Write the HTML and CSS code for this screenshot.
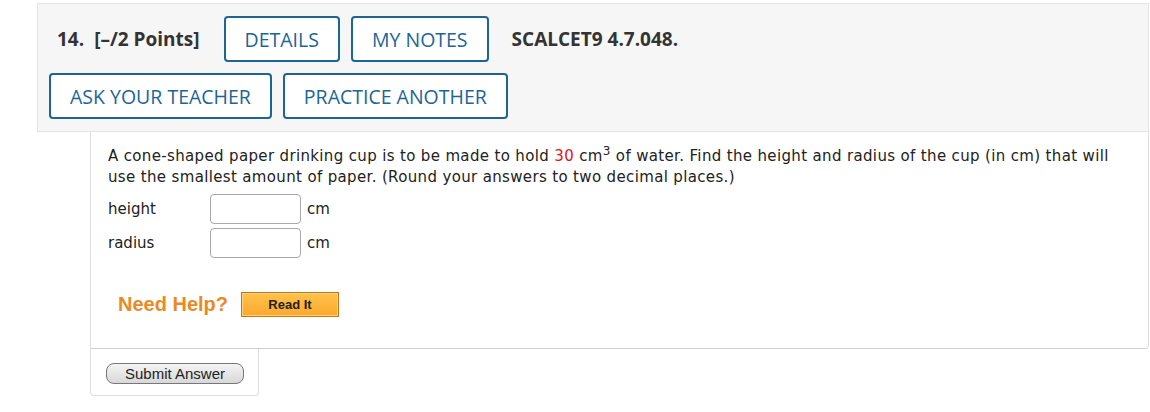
FILE: index.html
```html
<!DOCTYPE html>
<html lang="en">
<head>
  <meta charset="UTF-8" />
  <title>SCALCET9 4.7.048</title>
  <link rel="stylesheet" href="styles.css">
</head>
<body>

  <div class="question">
    <div class="q-header">
      <div class="q-row q-row-top">
        <span class="q-num">14.</span>
        <span class="q-points">[&ndash;/2 Points]</span>
        <button class="q-btn">DETAILS</button>
        <button class="q-btn">MY NOTES</button>
        <span class="q-code">SCALCET9 4.7.048.</span>
      </div>
      <div class="q-row">
        <button class="q-btn">ASK YOUR TEACHER</button>
        <button class="q-btn">PRACTICE ANOTHER</button>
      </div>
    </div>

    <div class="q-body">
      <p class="q-text">A cone-shaped paper drinking cup is to be made to hold <span class="red">30</span> cm<sup>3</sup> of water. Find the height and radius of the cup (in cm) that will use the smallest amount of paper. (Round your answers to two decimal places.)</p>

      <div class="answers">
        <div class="answer">
          <span class="answer-label">height</span>
          <input class="answer-box" type="text">
          <span class="unit">cm</span>
        </div>
        <div class="answer">
          <span class="answer-label">radius</span>
          <input class="answer-box" type="text">
          <span class="unit">cm</span>
        </div>
      </div>

      <div class="help">
        <span class="help-title">Need Help?</span>
        <button class="read-it">Read It</button>
      </div>
    </div>

    <div class="submit-tab">
      <button class="submit">Submit Answer</button>
    </div>
  </div>

</body>
</html>
```

FILE: styles.css
```css
:root {
  --blue: #1c6597;
  --panel: #f6f6f6;
  --line: #dedede;
  --text: #333;
  --orange: #ea8a1f;
}

body {
  margin: 0;
  padding: 3px 1px 0 37px;
  background: #fff;
  color: #222;
}

/* header strip with the question number and buttons */
.q-header {
  background: var(--panel);
  border: 1px solid #e4e4e4;
  padding: 12px 0 12px 11px;
  font-family: 'Open Sans', sans-serif;
}

.q-row {
  display: flex;
  align-items: center;
  gap: 11px;
}

.q-row + .q-row {
  margin-top: 11px;
}

.q-row-top {
  padding-left: 8px;
}

.q-num,
.q-points,
.q-code {
  font-weight: 700;
  font-size: 19px;
  color: var(--text);
}

.q-points {
  margin-left: -1px;
  margin-right: 13px;
}

.q-code {
  margin-left: 12px;
}

.q-btn {
  height: 46px;
  padding: 0 19px;
  border: 2px solid var(--blue);
  border-radius: 4px;
  background: #fff;
  color: var(--blue);
  font-family: 'Open Sans', sans-serif;
  font-size: 19.5px;
  cursor: pointer;
}

/* question body */
.q-body {
  margin-left: 53px;
  border-left: 1px solid var(--line);
  border-right: 1px solid var(--line);
  border-bottom: 1px solid #cfcfcf;
  border-bottom-right-radius: 4px;
  padding: 14px 30px 31px 17px;
  font-family: 'DejaVu Sans', Verdana, sans-serif;
  font-size: 15px;
  color: #222;
}

.q-text {
  margin: 0;
  line-height: 21px;
  letter-spacing: 0.35px;
}

.q-text sup {
  font-size: 12px;
  line-height: 0;
}

.red {
  color: #e3141b;
}

.answers {
  margin-top: 6px;
}

.answer {
  display: flex;
  align-items: center;
  height: 30px;
  margin-bottom: 4px;
}

.answer-label {
  width: 102px;
}

.answer-box {
  box-sizing: border-box;
  width: 91px;
  height: 30px;
  margin: 0;
  border: 1px solid #a8a8a8;
  border-radius: 4px;
  background: #fff;
}

.unit {
  margin-left: 6px;
}

.help {
  display: flex;
  align-items: center;
  gap: 13px;
  margin-top: 34px;
  padding-left: 10px;
}

.help-title {
  font-family: 'Liberation Sans', Arial, sans-serif;
  font-weight: 700;
  font-size: 20px;
  color: var(--orange);
}

.read-it {
  width: 98px;
  height: 25px;
  border: 1px solid #c27519;
  background: linear-gradient(to bottom, #ffc24e, #fba92b);
  box-shadow: inset 0 0 0 1px #ffd27a;
  font-family: 'Liberation Sans', Arial, sans-serif;
  font-weight: 700;
  font-size: 13px;
  color: #222;
  padding: 0;
}

/* tab under the body holding the submit button */
.submit-tab {
  margin-left: 53px;
  width: 169px;
  height: 47px;
  border: 1px solid var(--line);
  border-top: 0;
  border-radius: 0 0 4px 4px;
  padding: 14px 0 0 15px;
  box-sizing: border-box;
}

.submit {
  width: 138px;
  height: 21px;
  padding: 0;
  border: 1px solid #777;
  border-radius: 8px;
  background: linear-gradient(to bottom, #f4f4f4, #d8d8d8);
  font-family: 'Liberation Sans', Arial, sans-serif;
  font-size: 15px;
  color: #222;
}
```
